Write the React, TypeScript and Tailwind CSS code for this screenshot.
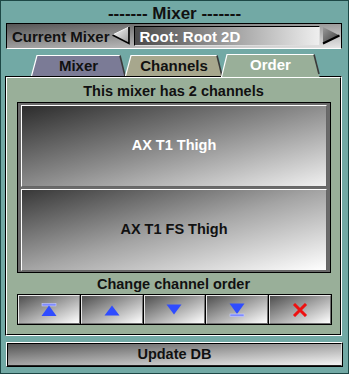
import React from "react";

function Tab({
  w,
  fill,
  label,
  textCls,
  active,
}: {
  w: number;
  fill: string;
  label: string;
  textCls: string;
  active?: boolean;
}) {
  const h = active ? 23 : 21;
  return (
    <div
      className={
        "relative flex items-center justify-center " +
        (active ? "h-[23px] -mb-[1px] pb-[3px]" : "h-[21px] pb-[1px]")
      }
      style={{ width: w }}
    >
      <svg className="absolute inset-0" width={w} height={h} viewBox={`0 0 ${w} ${h}`}>
        <path d={`M0.5 ${h} L6 0.5 L${w - 6} 0.5 L${w - 0.5} ${h} Z`} fill={fill} />
        <path d={`M0.5 ${h} L6 0.5 L${w - 6} 0.5`} stroke="#ffffff" strokeWidth="1.2" fill="none" />
        <path d={`M${w - 6} 0.5 L${w - 1} ${active ? h - 3 : h}`} stroke="#3a3a3a" strokeWidth="1.6" fill="none" />
      </svg>
      <span className={"relative text-[15px] leading-none " + textCls}>{label}</span>
    </div>
  );
}

const BLUE = "#2f4cff";

function IconTop() {
  return (
    <svg width="16" height="14" viewBox="0 0 16 14">
      <rect x="1" y="0.5" width="14" height="2.5" fill="#7f8cff" stroke="#c8ccff" strokeWidth="0.6" />
      <path d="M8 2.5 L0.5 13 L15.5 13 Z" fill={BLUE} />
    </svg>
  );
}
function IconUp() {
  return (
    <svg width="16" height="14" viewBox="0 0 16 14">
      <path d="M8 2.5 L0.5 12.5 L15.5 12.5 Z" fill={BLUE} />
    </svg>
  );
}
function IconDown() {
  return (
    <svg width="16" height="14" viewBox="0 0 16 14">
      <path d="M0.5 1.5 L15.5 1.5 L8 11.5 Z" fill={BLUE} />
    </svg>
  );
}
function IconBottom() {
  return (
    <svg width="16" height="14" viewBox="0 0 16 14">
      <path d="M0.5 0.5 L15.5 0.5 L8 11 Z" fill={BLUE} />
      <rect x="1" y="11" width="14" height="2.5" fill="#7f8cff" stroke="#c8ccff" strokeWidth="0.6" />
    </svg>
  );
}
function IconX() {
  return (
    <svg width="16" height="14" viewBox="0 0 16 14">
      <path d="M2 1 L14 13 M14 1 L2 13" stroke="#ee1111" strokeWidth="3" />
    </svg>
  );
}

function OrderButton({ children }: { children: React.ReactNode }) {
  return (
    <div className="flex-1 h-full flex items-center justify-center border-t border-l border-[#e8e8e8] border-r border-b border-r-[#707070] border-b-[#707070] bg-[linear-gradient(to_bottom_right,#4e4e4e,#ffffff)]">
      {children}
    </div>
  );
}

export default function App() {
  return (
    <div className="w-[349px] h-[374px] bg-[#72a9a5] border border-[#1d4846] flex flex-col font-['Liberation_Sans',Arial,sans-serif] font-bold text-[#111]">
      {/* Title */}
      <div className="h-[22px] flex items-center justify-center text-[17px] leading-none pt-[3px]">
        ------- Mixer -------
      </div>

      {/* Current mixer row */}
      <div className="ml-[5px] w-[336px] h-[26px] flex items-center border border-black border-b-white bg-[linear-gradient(to_bottom_right,#555555,#e6e6e6)]">
        <span className="ml-[5px] text-[15px] leading-none whitespace-nowrap">Current Mixer</span>
        <svg className="ml-[1px]" width="20" height="20" viewBox="0 0 20 20">
          <defs>
            <linearGradient id="la" x1="0" y1="0" x2="1" y2="1">
              <stop offset="0" stopColor="#ffffff" />
              <stop offset="1" stopColor="#9a9a9a" />
            </linearGradient>
          </defs>
          <path d="M1.5 9 L18 1 L18 17.5 Z" fill="url(#la)" />
          <path d="M1.5 9 L18 1" stroke="#f4f4f4" strokeWidth="1" fill="none" />
          <path d="M1.5 9 L18 17.5 L18 1" stroke="#000" strokeWidth="1.6" fill="none" />
        </svg>
        <div className="ml-[4px] w-[186px] h-[20px] flex items-center border border-black border-r-[#dddddd] border-b-[#dddddd] bg-[linear-gradient(to_right,#4a4a4a,#eeeeee)]">
          <span className="ml-[4px] text-white text-[15px] leading-none">Root: Root 2D</span>
        </div>
        <svg className="ml-[1px]" width="20" height="20" viewBox="0 0 20 20">
          <defs>
            <linearGradient id="ra" x1="0" y1="0" x2="1" y2="1">
              <stop offset="0" stopColor="#9a9a9a" />
              <stop offset="1" stopColor="#3a3a3a" />
            </linearGradient>
          </defs>
          <path d="M2 1 L18.5 9.5 L2 17.5 Z" fill="url(#ra)" />
          <path d="M2 17.5 L18.5 9.5" stroke="#000" strokeWidth="2" fill="none" />
        </svg>
      </div>

      {/* Tabs */}
      <div className="mt-[5px] h-[22px] flex items-end pl-[30px] relative z-10">
        <Tab w={95} fill="#7b7b96" label="Mixer" textCls="text-[#111]" />
        <div className="-ml-[1px]">
          <Tab w={98} fill="#a7a78d" label="Channels" textCls="text-[#111]" />
        </div>
        <div className="-ml-[2px]">
          <Tab w={99} fill="#99af99" label="Order" textCls="text-white" active />
        </div>
      </div>

      {/* Panel */}
      <div className="ml-[4px] w-[337px] h-[260px] border-l border-t border-black border-r border-b border-r-white border-b-white">
        <div className="w-full h-full border-l border-t border-white border-r border-b border-r-black border-b-black bg-[#99af99] flex flex-col">
          <div className="h-[24px] flex items-center justify-center text-[14.5px] leading-none pt-[3px]">
            This mixer has 2 channels
          </div>
          <div className="ml-[10px] w-[314px] h-[171px] border border-black bg-[#6a6a6a] pl-[3px] pr-[3px] pt-[2px] pb-[1px] flex flex-col gap-[2px]">
            <div className="flex-1 flex items-center justify-center border-t border-l border-white border-r border-b border-r-[#666] border-b-[#666] bg-[linear-gradient(165deg,#2c2c2c_0%,#8c8c8c_50%,#f0f0f0_100%)] text-white text-[14.5px]">
              AX T1 Thigh
            </div>
            <div className="flex-1 flex items-center justify-center border-t border-l border-white border-r border-b border-r-[#666] border-b-[#666] bg-[linear-gradient(165deg,#383838_0%,#a4a4a4_50%,#ffffff_100%)] text-[#111] text-[14.5px]">
              AX T1 FS Thigh
            </div>
          </div>
          <div className="h-[21px] flex items-center justify-center text-[14.5px] leading-none pt-[1px]">
            Change channel order
          </div>
          <div className="ml-[10px] w-[315px] h-[31px] border border-black bg-black flex gap-[1px]">
            <OrderButton>
              <IconTop />
            </OrderButton>
            <OrderButton>
              <IconUp />
            </OrderButton>
            <OrderButton>
              <IconDown />
            </OrderButton>
            <OrderButton>
              <IconBottom />
            </OrderButton>
            <OrderButton>
              <IconX />
            </OrderButton>
          </div>
        </div>
      </div>

      {/* Update DB */}
      <div className="mt-[6px] ml-[5px] w-[337px] h-[25px] border-l border-t border-white border-r border-b border-r-black border-b-black">
        <div className="w-full h-full border-l border-t border-black border-r border-b border-r-[#dddddd] border-b-[#222] flex items-center justify-center bg-[linear-gradient(to_bottom_right,#555555,#f4f4f4)] text-[14.5px]">
          Update DB
        </div>
      </div>
    </div>
  );
}
